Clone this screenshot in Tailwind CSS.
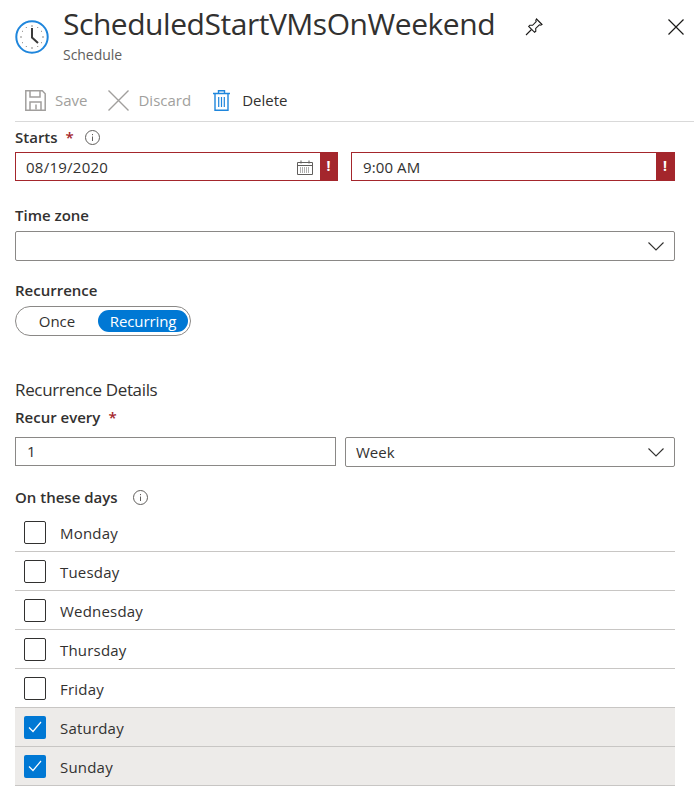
<!DOCTYPE html>
<html lang="en">
<head>
    <meta charset="UTF-8">
    <meta name="viewport" content="width=device-width, initial-scale=1.0">
    <title>ScheduledStartVMsOnWeekend</title>
    <script src="https://cdn.jsdelivr.net/npm/@tailwindcss/browser@4"></script>
</head>
<body class="bg-white font-['Open_Sans',sans-serif] text-[#323130] h-[796px] overflow-hidden">
    <!-- header -->
    <div class="flex h-[74px] pl-[15px]">
        <svg class="w-[34px] h-[34px] mt-[20px] shrink-0" viewBox="0 0 34 34" fill="none">
            <circle cx="17" cy="17" r="15.7" stroke="#1f86dc" stroke-width="2"/>
            <path d="M17 5v2M17 27v2M5 17h2M27 17h2M11 7l.6 1M23 7l-.6 1M7 11l1 .6M27 11l-1 .6M7 23l1-.6M27 23l-1-.6M11 27l.6-1M23 27l-.6-1" stroke="#8a8886" stroke-width="1"/>
            <path d="M17 8v9.5L23 23" stroke="#3a3a3a" stroke-width="2"/>
        </svg>
        <div class="ml-[14px] w-[432px]">
            <div class="text-[30px] leading-[36px] mt-[6px] font-medium tracking-[-0.46px] whitespace-nowrap">ScheduledStartVMsOnWeekend</div>
            <div class="text-[14px] leading-[16px] mt-[5px] text-[#605e5c] tracking-[-0.05px]">Schedule</div>
        </div>
        <svg class="w-[18px] h-[18px] ml-[30px] mt-[18px]" viewBox="0 0 18 18" fill="none" stroke="#1b1a19" stroke-width="1.1">
            <path d="M11.5 1 17 6.5 15.8 7.2 14.4 6.8 10.7 10.4 10.8 13.2 9.6 14.3 3.7 8.4 4.8 7.2 7.6 7.3 11.2 3.6 10.8 2.2Z"/>
            <path d="M6.5 11.5 1 17"/>
        </svg>
        <svg class="w-[16px] h-[16px] ml-[125px] mt-[19px]" viewBox="0 0 16 16" fill="none" stroke="#1b1a19" stroke-width="1.2">
            <path d="M.5.5l15 15M15.5.5l-15 15"/>
        </svg>
    </div>
    <!-- toolbar -->
    <div class="flex items-center h-[48px] pt-[5px] ml-[15px] border-b border-[#d9d9d9] text-[15px]">
        <svg class="w-[21px] h-[21px] ml-[10px]" viewBox="0 0 21 21" fill="none" stroke="#a19f9d" stroke-width="1.5">
            <path d="M.8.8h16.5l2.9 2.9v16.5H.8Z"/>
            <path d="M5 1v6h10V1M5 20v-8h11v8M11 14.5v5"/>
        </svg>
        <span class="ml-[9px] text-[#a19f9d]">Save</span>
        <svg class="w-[21px] h-[21px] ml-[21px]" viewBox="0 0 21 21" fill="none" stroke="#a19f9d" stroke-width="1.4">
            <path d="M.5.5l20 20M20.5.5l-20 20"/>
        </svg>
        <span class="ml-[9px] text-[#a19f9d]">Discard</span>
        <svg class="w-[17px] h-[21px] ml-[22px]" viewBox="0 0 17 21" fill="none" stroke="#1f86dc" stroke-width="1.4">
            <path d="M0 3.5h17M5.5 3.5v-2.7h6v2.7M2 3.5v16.7h13V3.5"/>
            <path d="M5.7 7v10M8.5 7v10M11.3 7v10" stroke-width="1.2"/>
        </svg>
        <span class="ml-[12px]">Delete</span>
    </div>

    <div class="pl-[15px] w-[675px]">
        <!-- starts -->
        <div class="flex items-center h-[20px] mt-[5px] text-[15px] font-semibold">
            <span>Starts</span><span class="ml-[8px] text-[#a4262c]">*</span>
            <svg class="w-[15px] h-[15px] ml-[11px]" viewBox="0 0 15 15" fill="none" stroke="#605e5c"><circle cx="7.5" cy="7.5" r="7"/><path d="M7.5 6.5v4.5M7.5 4v1.2"/></svg>
        </div>
        <div class="flex gap-[13px] mt-[5px]">
            <div class="flex w-[323px] h-[29px] border border-[#a4262c]">
                <div class="flex-1 pl-[10px] text-[15px] leading-[29px] tracking-[0.25px]">08/19/2020</div>
                <svg class="w-[16px] h-[15px] mt-[7px] mr-[7px]" viewBox="0 0 16 15" fill="none" stroke="#605e5c">
                    <path d="M.5 2.5h15v12H.5ZM.5 5.5h15M4 .5v3M12 .5v3"/>
                    <path d="M3 8h10M3 10h10M3 12h10" stroke-dasharray="1 1"/>
                </svg>
                <div class="w-[17px] bg-[#a4262c] text-white text-[14px] font-bold leading-[26px] text-center">!</div>
            </div>
            <div class="flex w-[324px] h-[29px] border border-[#a4262c]">
                <div class="flex-1 pl-[11px] text-[15px] leading-[29px] tracking-[0.1px]">9:00 AM</div>
                <div class="w-[18px] bg-[#a4262c] text-white text-[14px] font-bold leading-[26px] text-center">!</div>
            </div>
        </div>
        <!-- time zone -->
        <div class="h-[20px] mt-[24px] text-[15px] leading-[20px] font-semibold">Time zone</div>
        <div class="flex items-center justify-end h-[30px] mt-[6px] border border-[#8a8886] rounded-[2px] pr-[10px]">
            <svg class="w-[16px] h-[9px]" viewBox="0 0 16 9" fill="none" stroke="#323130" stroke-width="1.1"><path d="M.5.5 8 8l7.5-7.5"/></svg>
        </div>
        <!-- recurrence -->
        <div class="h-[20px] mt-[19px] text-[15px] leading-[20px] font-semibold">Recurrence</div>
        <div class="flex items-center w-[176px] h-[30px] mt-[6px] border border-[#8a8886] rounded-full text-[15px]">
            <span class="w-[82px] text-center">Once</span>
            <span class="w-[90px] h-[22px] leading-[22px] rounded-full bg-[#0078d4] text-white text-center tracking-[-0.1px]">Recurring</span>
        </div>
        <!-- details -->
        <div class="h-[22px] mt-[43px] text-[17px] leading-[22px] tracking-[-0.35px]">Recurrence Details</div>
        <div class="flex h-[20px] mt-[6px] text-[15px] leading-[20px] font-semibold">
            <span>Recur every</span><span class="ml-[8px] text-[#a4262c]">*</span>
        </div>
        <div class="flex mt-[10px] gap-[9px]">
            <div class="w-[321px] h-[29px] border border-[#8a8886] pl-[11px] text-[15px] leading-[27px]">1</div>
            <div class="flex items-center justify-between w-[330px] h-[30px] border border-[#8a8886] rounded-[2px] pl-[10px] pr-[10px] text-[15px]">
                <span>Week</span>
                <svg class="w-[16px] h-[9px]" viewBox="0 0 16 9" fill="none" stroke="#323130" stroke-width="1.1"><path d="M.5.5 8 8l7.5-7.5"/></svg>
            </div>
        </div>
        <!-- days -->
        <div class="flex items-center h-[20px] mt-[20px] text-[15px] font-semibold">
            <span>On these days</span>
            <svg class="w-[15px] h-[15px] ml-[15px]" viewBox="0 0 15 15" fill="none" stroke="#605e5c"><circle cx="7.5" cy="7.5" r="7"/><path d="M7.5 6.5v4.5M7.5 4v1.2"/></svg>
        </div>
        <div class="text-[15px] tracking-[0.2px] mt-[6px]">
            <div class="flex items-center h-[39px] border-b border-[#c8c6c4]">
                <span class="w-[22px] h-[23px] ml-[9px] border border-[#323130] rounded-[2px]"></span><span class="ml-[14px] pt-[3px]">Monday</span>
            </div>
            <div class="flex items-center h-[39px] border-b border-[#c8c6c4]">
                <span class="w-[22px] h-[23px] ml-[9px] border border-[#323130] rounded-[2px]"></span><span class="ml-[14px] pt-[3px]">Tuesday</span>
            </div>
            <div class="flex items-center h-[39px] border-b border-[#c8c6c4]">
                <span class="w-[22px] h-[23px] ml-[9px] border border-[#323130] rounded-[2px]"></span><span class="ml-[14px] pt-[3px]">Wednesday</span>
            </div>
            <div class="flex items-center h-[39px] border-b border-[#c8c6c4]">
                <span class="w-[22px] h-[23px] ml-[9px] border border-[#323130] rounded-[2px]"></span><span class="ml-[14px] pt-[3px]">Thursday</span>
            </div>
            <div class="flex items-center h-[39px] border-b border-[#c8c6c4]">
                <span class="w-[22px] h-[23px] ml-[9px] border border-[#323130] rounded-[2px]"></span><span class="ml-[14px] pt-[3px]">Friday</span>
            </div>
            <div class="flex items-center h-[39px] border-b border-[#c8c6c4] bg-[#edebe9]">
                <span class="flex items-center justify-center w-[22px] h-[23px] ml-[9px] bg-[#0078d4] rounded-[2px]">
                    <svg class="w-[14px] h-[12px]" viewBox="0 0 14 12" fill="none" stroke="#fff" stroke-width="1.2"><path d="M1 6.5 5 10.5 13 1"/></svg>
                </span><span class="ml-[14px] pt-[3px]">Saturday</span>
            </div>
            <div class="flex items-center h-[39px] border-b border-[#c8c6c4] bg-[#edebe9]">
                <span class="flex items-center justify-center w-[22px] h-[23px] ml-[9px] bg-[#0078d4] rounded-[2px]">
                    <svg class="w-[14px] h-[12px]" viewBox="0 0 14 12" fill="none" stroke="#fff" stroke-width="1.2"><path d="M1 6.5 5 10.5 13 1"/></svg>
                </span><span class="ml-[14px] pt-[3px]">Sunday</span>
            </div>
        </div>
    </div>
</body>
</html>
